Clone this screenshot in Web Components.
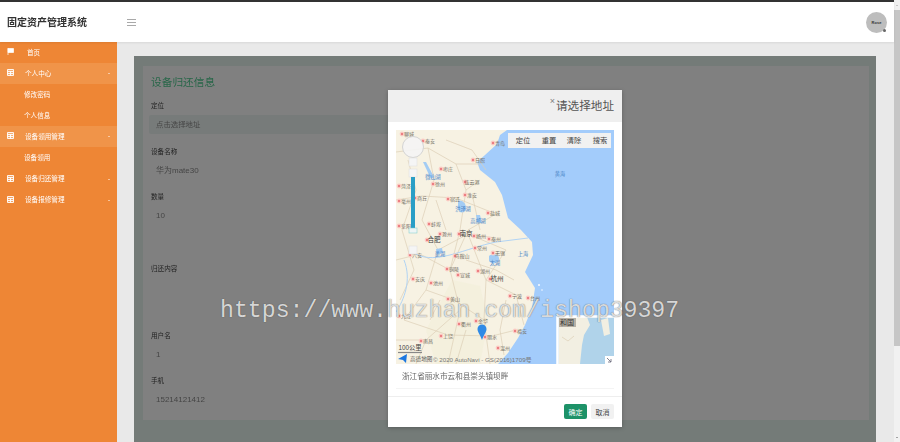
<!DOCTYPE html>
<html lang="zh">
<head>
<meta charset="utf-8">
<title>固定资产管理系统</title>
<style>
  html, body { margin: 0; height: 442px; overflow: hidden; }
  body { font-family: "Liberation Sans", "Noto Sans CJK SC", sans-serif; background: #e9e9e9; }
  .screen { display: flex; height: 442px; position: relative; }
  .left { flex: 1; min-width: 0; display: flex; flex-direction: column; }
  .row { flex: 1; min-height: 0; display: flex; }
</style>
</head>
<body>
<div class="screen">
  <div class="left">
    <app-header title="固定资产管理系统"></app-header>
    <div class="row">
      <side-nav>
        <nav-item icon="flag" indent="27">首页</nav-item>
        <nav-item icon="grid" caret active>个人中心</nav-item>
        <nav-item sub>修改密码</nav-item>
        <nav-item sub>个人信息</nav-item>
        <nav-item icon="grid" caret active>设备领用管理</nav-item>
        <nav-item sub>设备领用</nav-item>
        <nav-item icon="grid" caret>设备归还管理</nav-item>
        <nav-item icon="grid" caret>设备报修管理</nav-item>
      </side-nav>
      <content-panel>
        <form-card heading="设备归还信息">
          <form-field label="定位" value="点击选择地址" filled></form-field>
          <form-field label="设备名称" value="华为mate30"></form-field>
          <form-field label="数量" value="10"></form-field>
          <form-field label="归还内容" tall></form-field>
          <form-field label="用户名" value="1"></form-field>
          <form-field label="手机" value="15214121412"></form-field>
        </form-card>
        <address-modal slot="overlay" heading="请选择地址" address="浙江省丽水市云和县崇头镇坝畔"></address-modal>
      </content-panel>
    </div>
  </div>
  <page-scrollbar></page-scrollbar>
  <water-mark>https://www.huzhan.com/ishop39397</water-mark>
</div>

<script>
const FONT = '"Liberation Sans", "Noto Sans CJK SC", sans-serif';

class AppHeader extends HTMLElement {
  connectedCallback() {
    this.attachShadow({ mode: 'open' }).innerHTML = `
      <style>
      :host { display: flex; align-items: center; height: 40px; flex: none; background: #fff;
        border-top: 2px solid #333; box-shadow: 0 1px 2px rgba(0,0,0,.08); position: relative; z-index: 1; font-family: ${FONT}; }
      .title { width: 127px; padding: 0 0 2px 7px; box-sizing: border-box; font-size: 10px; font-weight: bold; color: #333; filter: blur(.3px); }
      .burger { width: 9px; height: 7px; display: flex; flex-direction: column; justify-content: space-between; }
      .burger i { display: block; height: 1px; background: #a9a9a9; }
      .avatar { margin-left: auto; margin-right: 7px; width: 21px; height: 21px; border-radius: 50%; background: #bdbdbd;
        display: flex; align-items: center; justify-content: center; font-size: 4px; font-weight: bold; color: #333; position: relative; }
      .avatar::after { content: ""; position: absolute; right: 1px; bottom: 1px; width: 3px; height: 3px; border-radius: 50%; background: #666; }
      </style>
      <div class="title">${this.getAttribute('title')}</div>
      <div class="burger"><i></i><i></i><i></i></div>
      <div class="avatar">Rose</div>`;
  }
}

class SideNav extends HTMLElement {
  connectedCallback() {
    this.attachShadow({ mode: 'open' }).innerHTML = `
      <style>
      :host { display: block; width: 117px; flex: none; background: #ee8635; font-family: ${FONT}; }
      </style>
      <slot></slot>`;
  }
}

const NAV_ICONS = {
  flag: '<path d="M1 0v7M1 .5h5.500v4H1z" fill="#fff" stroke="#fff" stroke-width=".7"/>',
  grid: '<path d="M.5 .5h6v6h-6zM.5 2.500h6M.5 4.500h6M3.500 2.500v4" fill="#fbe3cd" fill-opacity=".35" stroke="#fff" stroke-width=".9"/>'
};

class NavItem extends HTMLElement {
  connectedCallback() {
    const icon = this.getAttribute('icon');
    this.attachShadow({ mode: 'open' }).innerHTML = `
      <style>
      :host { display: flex; align-items: center; height: 21.1px; font-size: 6.6px; color: #fff; }
      :host([active]) { background: #f09449; }
      .icon { width: 7px; height: 7px; margin-left: 7px; margin-right: 11px; margin-bottom: 2px; flex: none; }
      .label { filter: blur(.3px); margin-bottom: 2px; }
      :host([sub]) .label { margin-left: 24px; }
      .caret { margin-left: auto; margin-right: 7px; width: 0; height: 0; border: 1.5px solid transparent; border-top-color: #fff; border-bottom: 0; }
      </style>
      ${icon ? `<svg class="icon" viewBox="0 0 7 7">${NAV_ICONS[icon]}</svg>` : ''}
      <span class="label" style="${this.getAttribute('indent') ? 'margin-left:2px' : ''}"><slot></slot></span>
      ${this.hasAttribute('caret') ? '<span class="caret"></span>' : ''}`;
  }
}

class ContentPanel extends HTMLElement {
  connectedCallback() {
    this.attachShadow({ mode: 'open' }).innerHTML = `
      <style>
      :host { display: block; flex: 1; min-width: 0; padding: 14px 18px 0 17px; }
      .frame { position: relative; height: 100%; box-sizing: border-box; background: #747b78; padding: 10px 7px 0 9px; }
      .overlay { position: absolute; inset: 0; display: flex; justify-content: center; align-items: flex-start; padding-top: 34px; }
      </style>
      <div class="frame">
        <slot></slot>
        <div class="overlay"><slot name="overlay"></slot></div>
      </div>`;
  }
}

class FormCard extends HTMLElement {
  connectedCallback() {
    this.attachShadow({ mode: 'open' }).innerHTML = `
      <style>
      :host { display: block; height: 354px; box-sizing: border-box; background: #808080; padding: 9px 0 0 6px; font-family: ${FONT}; }
      h2 { margin: 0 0 12px 2px; font-size: 10.7px; line-height: 14px; font-weight: normal; color: #276648; filter: blur(.25px); }
      </style>
      <h2>${this.getAttribute('heading')}</h2>
      <slot></slot>`;
  }
}

class FormField extends HTMLElement {
  connectedCallback() {
    const value = this.getAttribute('value') || '';
    this.attachShadow({ mode: 'open' }).innerHTML = `
      <style>
      :host { display: block; height: 45px; }
      :host([filled]) { height: 46px; }
      :host([tall]) { height: 67px; margin-top: 27px; }
      .label { height: 10px; line-height: 10px; padding-left: 2px; font-size: 6.6px; color: #222; filter: blur(.2px); }
      .value { margin-top: 4px; height: 19px; line-height: 19px; padding-left: 7px; font-size: 8px; color: #454545; filter: blur(.2px); }
      :host([filled]) .value { background: #777b7a; border-radius: 2px; width: 240px; font-size: 7.4px; }
      </style>
      <div class="label">${this.getAttribute('label')}</div>
      <div class="value">${value}</div>`;
  }
}

class AddressModal extends HTMLElement {
  connectedCallback() {
    this.attachShadow({ mode: 'open' }).innerHTML = `
      <style>
      :host { display: block; width: 234px; height: 337px; background: #fff; font-family: ${FONT}; box-shadow: 0 1px 4px rgba(0,0,0,.25); }
      header { height: 32px; background: #efefef; display: flex; justify-content: flex-end; padding-right: 8px; box-sizing: border-box; }
      .close { font-size: 9px; line-height: 22px; color: #808080; margin-right: 1px; }
      h3 { margin: 0; font-size: 11.6px; line-height: 32px; font-weight: normal; color: #555; }
      .body { padding: 8px 8px 0; }
      .addr { height: 22px; line-height: 22px; margin-top: 2px; padding-left: 6px; font-size: 7.6px; color: #666; border-bottom: 1px solid #f4f4f4; filter: blur(.2px); }
      hr { margin: 7px 0 0; border: 0; border-top: 1px solid #eee; }
      footer { display: flex; justify-content: flex-end; gap: 4px; padding: 7px 8px 0; }
      button { width: 23px; height: 15px; padding: 0; border: 0; border-radius: 2px; font: 7px ${FONT}; background: #f1f1f1; color: #444; }
      button.ok { background: #1d9268; color: #fff; }
      </style>
      <header><span class="close">×</span><h3>${this.getAttribute('heading')}</h3></header>
      <div class="body">
        <amap-view></amap-view>
        <div class="addr">${this.getAttribute('address')}</div>
      </div>
      <hr>
      <footer><button class="ok">确定</button><button>取消</button></footer>`;
  }
}

// [name, x, y] in map coordinates, dot drawn just left of the label
const CITIES = [
  ['聊城',13,3],['泰安',34,10],['青岛',104,12],['日照',84,29],['枣庄',52,38],['连云港',76,51],['徐州',44,53],
  ['商丘',26,67],['宿迁',59,68],['淮安',76,64],['盐城',99,82],['阜阳',10,95],['蚌埠',40,93],['滁州',51,103],
  ['扬州',85,105],['泰州',100,108],['亳州',10,70],['菏泽',10,55],['六安',21,124],['马鞍山',66,125],['常州',86,117],
  ['无锡',104,122],['铜陵',58,138],['宣城',69,144],['湖州',89,140],['安庆',24,148],['池州',42,152],
  ['宁波',121,165],['台州',139,167],['黄山',59,168],['衢州',70,193],['金华',87,190],['上饶',52,205],['南昌',32,210],
  ['丽水',96,206],['温州',109,217],['福安',126,200],['九江',10,185]
];
const BOLD = [['南京',70,103],['合肥',38,109],['杭州',101,148]];
const WATER = [['微山湖',37,46],['洪泽湖',67,78],['高邮湖',82,90],['巢湖',44,123],['太湖',99,132],['上海',127,123],['黄海',164,43]];

class AmapView extends HTMLElement {
  connectedCallback() {
    const dots = CITIES.concat(BOLD).map(c => `<circle cx="${c[1]-7}" cy="${c[2]+1}" r="2.4" fill="#fbd0c8"/><circle cx="${c[1]-7}" cy="${c[2]+1}" r="1.2" fill="#ec7d80"/>`).join('');
    const labels = CITIES.map(c => `<text x="${c[1]}" y="${c[2]+3}" font-size="5" text-anchor="middle" fill="#746f64">${c[0]}</text>`).join('')
      + BOLD.map(c => `<text x="${c[1]}" y="${c[2]+3}" font-size="6.6" text-anchor="middle" fill="#3a3a3a">${c[0]}</text>`).join('')
      + WATER.map(c => `<text x="${c[1]}" y="${c[2]+3}" font-size="5.2" text-anchor="middle" fill="#4a84c6">${c[0]}</text>`).join('');
    this.attachShadow({ mode: 'open' }).innerHTML = `
      <style>
      :host { display: block; width: 218px; height: 234px; font-family: ${FONT}; }
      svg { display: block; }
      text { font-family: ${FONT}; }
      </style>
      <svg width="218" height="234" viewBox="0 0 218 234">
        <rect width="218" height="234" fill="#a3ccfb"/>
        <path d="M0 0H111L104 5L101 14L89 25L81 32L84 40L94 48L99 52L106 65L112 88L125 100L136 112L137 125L129 142L139 158L136 178L129 195L122 208L112 223L102 234H0Z" fill="#f7f2e3"/>
        <path d="M56 150L84 156L92 190L84 234H40L30 200Z" fill="#f2efda" opacity=".7"/>
        <g fill="none" stroke="#dccfb6" stroke-width=".7">
          <path d="M0 22L32 18L60 34L84 34M32 18L38 50L26 90L42 120L30 160L8 190M60 34L70 60L64 100L54 140L64 180L52 234M84 50L70 60M100 84L72 100L54 140M100 108L72 104L90 150L88 190L94 234M90 150L120 165M42 120L72 104M0 130L24 124L54 140M30 160L58 170L88 190M0 70L26 66L60 68L100 84M8 190L52 205L96 206L120 200"/>
          <path d="M120 165L128 195M64 180L30 210L20 234M0 210L32 210M110 120L90 150M72 104L110 120M12 30L20 60L6 100L18 140L4 170M50 10L76 20L90 40M40 70L50 100M76 64L84 100M70 130L100 140L118 150M44 170L34 190M70 200L60 234M110 170L104 200L108 225"/>
        </g>
        <g fill="#a3ccf4">
          <path d="M27 32L30 32L38 47L35 49Z"/>
          <path d="M62 71C66 69 71 74 70 80C67 84 63 83 62 78Z"/>
          <path d="M80 85L84 85L86 93L81 92Z"/>
          <path d="M40 119L46 118L47 123L41 124Z"/>
          <path d="M93 126C97 122 104 124 103 130C100 135 95 134 93 131Z"/>
          <path d="M0 182C8 170 16 150 8 130M20 124C40 135 70 118 100 112L132 108" fill="none" stroke="#b0d3f4" stroke-width="1"/>
        </g>
        <g fill="#fff" opacity=".9"><circle cx="143" cy="155" r="1"/><circle cx="146" cy="160" r=".8"/><circle cx="140" cy="172" r="1"/></g>
        ${dots}
        ${labels}

        <!-- zoom control -->
        <circle cx="17" cy="17" r="10.5" fill="#f4f4f4" fill-opacity=".9" stroke="#d4d4d4"/>
        <rect x="13" y="28" width="8" height="8" fill="#f5f5f5" stroke="#ddd" stroke-width=".5"/>
        <rect x="13" y="39" width="8" height="8" fill="#f5f5f5" stroke="#ddd" stroke-width=".5"/>
        <rect x="15" y="47" width="4" height="51" fill="#2a9ec6"/>
        <rect x="13" y="98" width="8" height="5" fill="#eef5f5" stroke="#7cc" stroke-width=".5"/>
        <rect x="13" y="116" width="8" height="8" fill="#f5f5f5" stroke="#ddd" stroke-width=".5"/>

        <!-- toolbar -->
        <rect x="112" y="3" width="103" height="15" fill="#f1f1f1"/>
        <g font-size="7.3" fill="#444" text-anchor="middle">
          <text x="127" y="13">定位</text><text x="153" y="13">重置</text><text x="178" y="13">清除</text><text x="204" y="13">搜索</text>
        </g>

        <!-- pin -->
        <path d="M86 194.5a4.500 4.500 0 0 1 4.500 4.500c0 3-2.800 6-4.500 11c-1.700-5-4.500-8-4.500-11a4.500 4.500 0 0 1 4.500-4.500z" fill="#2f8ae6"/>

        <!-- inset map -->
        <rect x="161" y="186" width="57" height="48" fill="#b0d3ea"/>
        <path d="M163 187H191L194 195L188 205L186 215L184 234H163Z" fill="#f2efe2"/>
        <path d="M205 190L212 188L214 204L208 206Z" fill="#f2efe2"/>
        <path d="M166 207L172 211L178 206" fill="none" stroke="#d9c9ae" stroke-width=".6"/>
        <path d="M161.5 186V234M161 186.5H218" stroke="#fff" stroke-width="2.5"/>
        <rect x="163" y="188" width="17" height="9" fill="#b7b1a6"/>
        <text x="171" y="195" font-size="7" text-anchor="middle" fill="#333">和国</text>
        <rect x="209" y="226" width="9" height="8" fill="#fff"/>
        <path d="M211 228l4 4M212 232h3v-3" fill="none" stroke="#667" stroke-width=".8"/>

        <!-- scale and copyright -->
        <text x="14" y="220" font-size="6.3" text-anchor="middle" fill="#444">100公里</text>
        <path d="M2 222.5H26" stroke="#888" stroke-width="1.2"/>
        <path d="M2 229L11 224L10 233L7 230Z" fill="#1d78e0"/>
        <text x="14" y="231" font-size="5.6" fill="#555">高德地图</text>
        <text x="37" y="232" font-size="6.2" fill="#777">© 2020 AutoNavi - GS(2016)1709号</text>
      </svg>`;
  }
}

class PageScrollbar extends HTMLElement {
  connectedCallback() {
    this.attachShadow({ mode: 'open' }).innerHTML = `
      <style>
      :host { display: flex; flex-direction: column; width: 6px; flex: none; background: #f1f1f1; box-sizing: border-box; color: #777; }
      .arrow { height: 10px; display: flex; align-items: center; justify-content: center; }
      .arrow i { width: 0; height: 0; border: 1.5px solid transparent; border-top: 0; border-bottom-color: #999; }
      .thumb { height: 336px; background: #c6c6c6; }
      .down { margin-top: auto; }
      .down i { border-bottom: 0; border-top: 1.5px solid #555; }
      </style>
      <div class="arrow"><i></i></div>
      <div class="thumb"></div>
      <div class="arrow down"><i></i></div>`;
  }
}

class WaterMark extends HTMLElement {
  connectedCallback() {
    this.attachShadow({ mode: 'open' }).innerHTML = `
      <style>
      :host { position: absolute; left: 220px; top: 297px; font: 23.2px/28px "Liberation Mono", monospace; color: rgba(255,255,255,.78);
        text-shadow: 0 0 1px rgba(50,50,50,.85); white-space: nowrap; z-index: 5; }
      </style>
      <slot></slot>`;
  }
}

customElements.define('app-header', AppHeader);
customElements.define('side-nav', SideNav);
customElements.define('nav-item', NavItem);
customElements.define('content-panel', ContentPanel);
customElements.define('form-card', FormCard);
customElements.define('form-field', FormField);
customElements.define('address-modal', AddressModal);
customElements.define('amap-view', AmapView);
customElements.define('page-scrollbar', PageScrollbar);
customElements.define('water-mark', WaterMark);
</script>
</body>
</html>
